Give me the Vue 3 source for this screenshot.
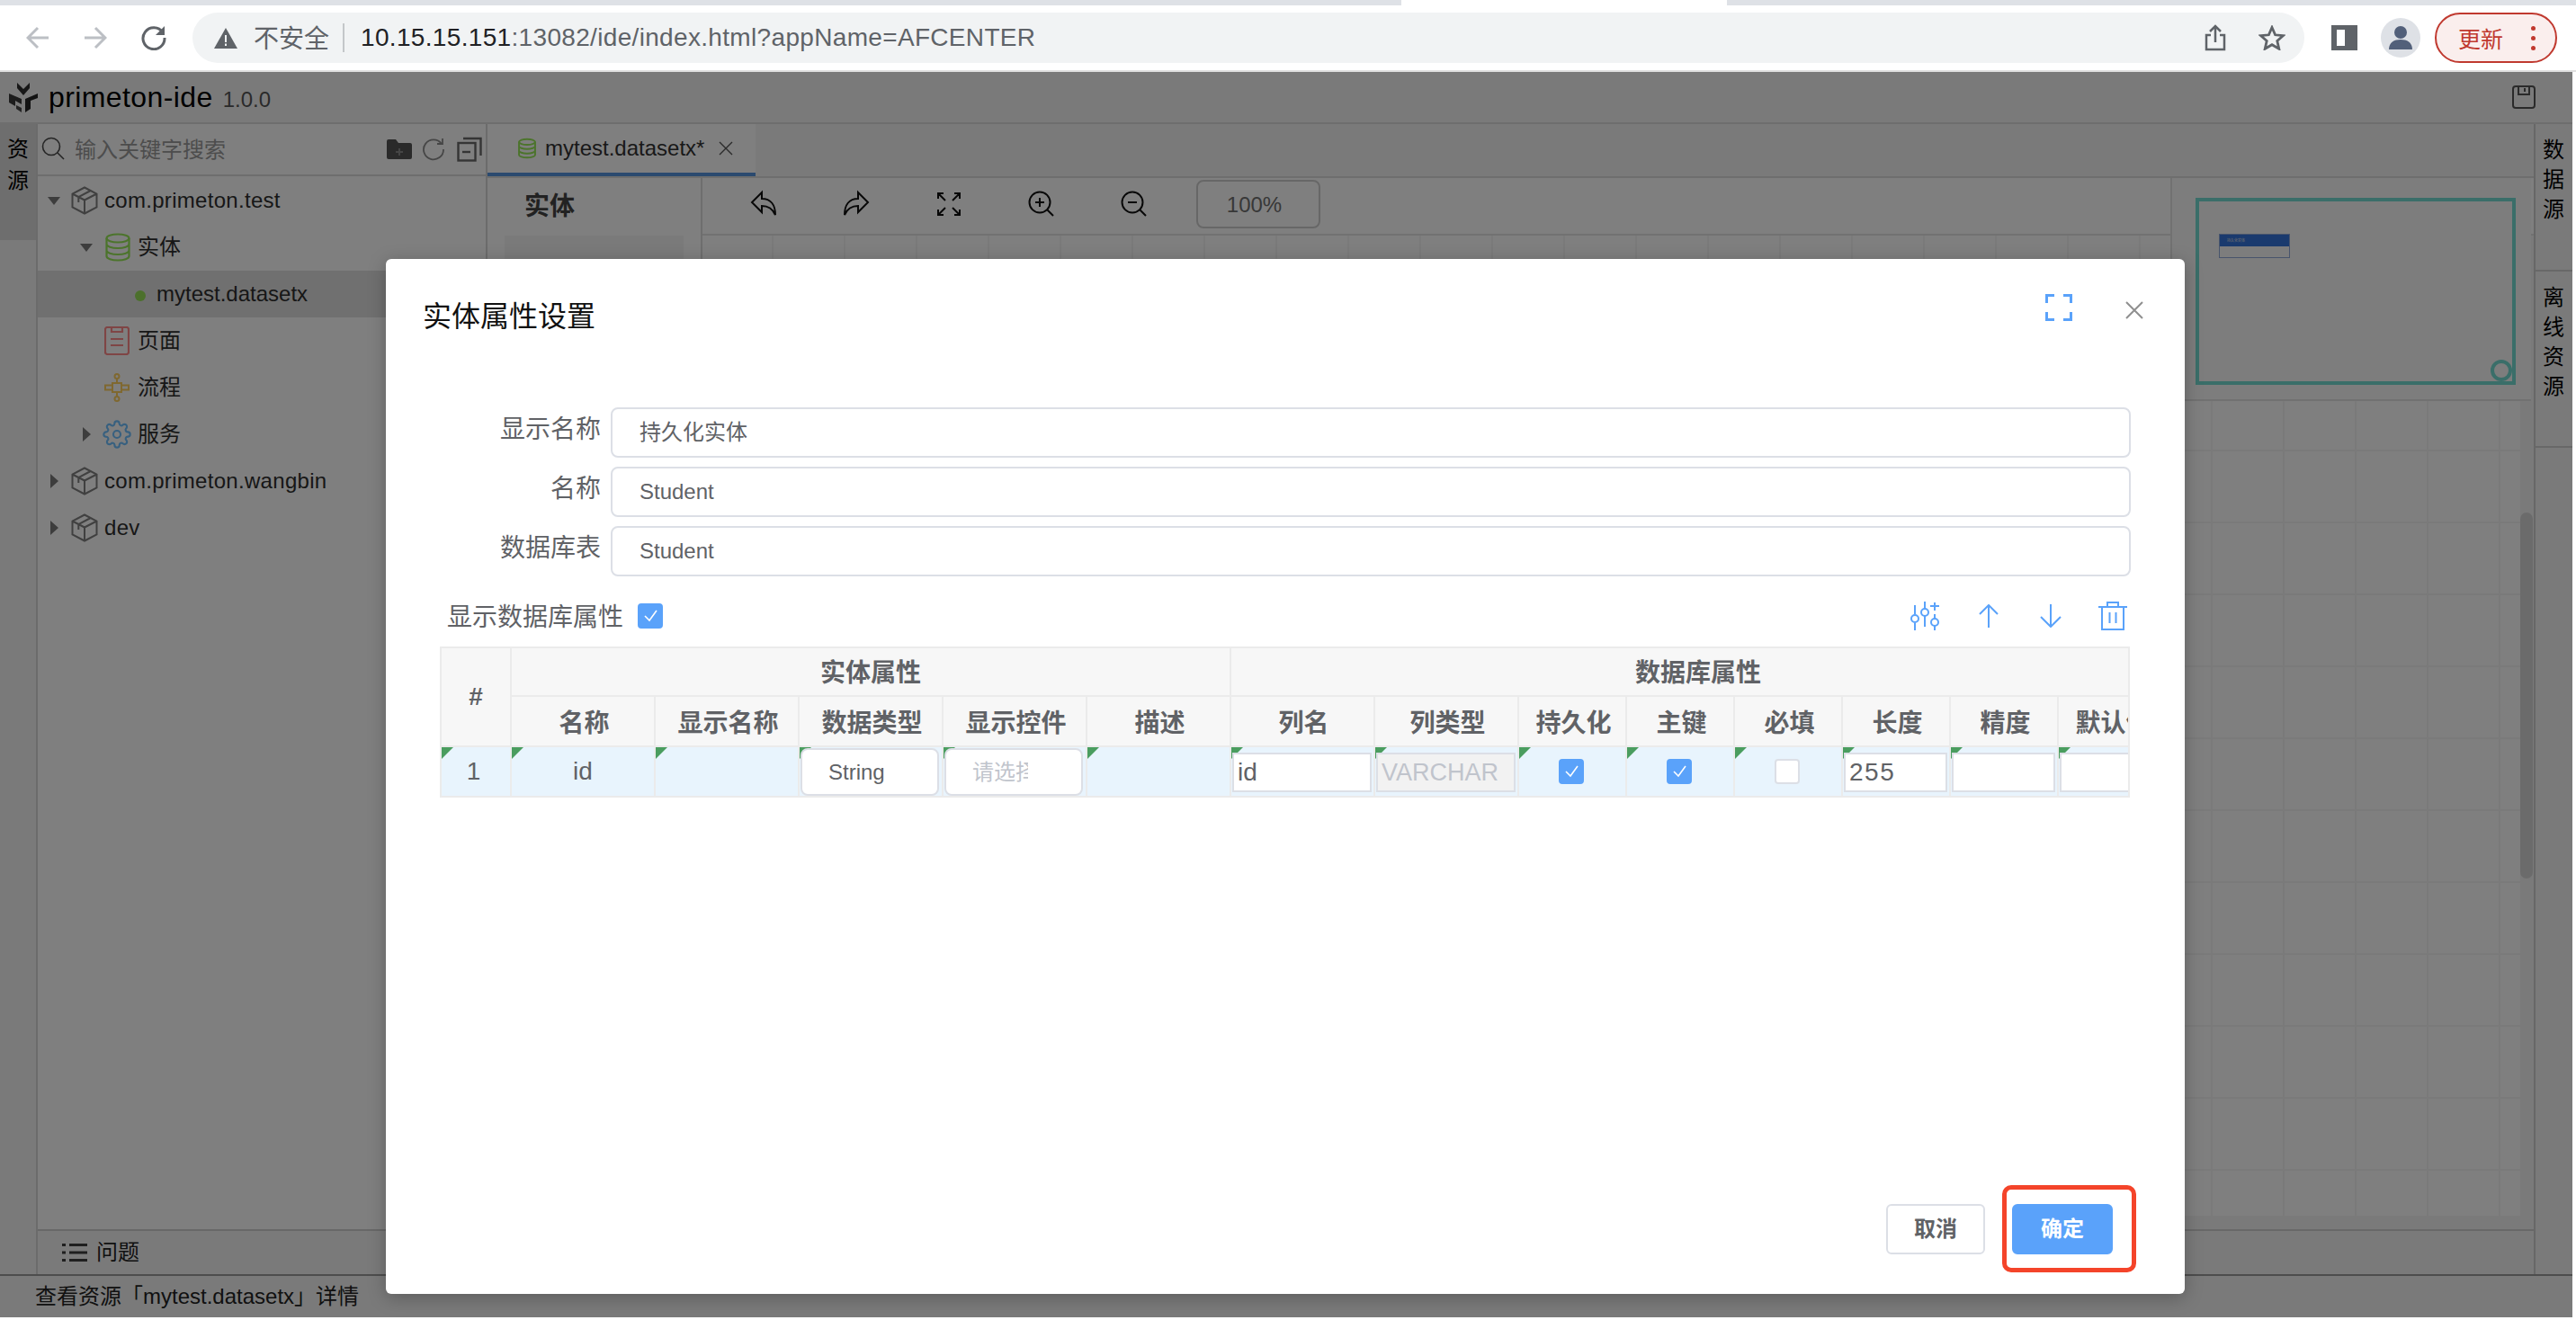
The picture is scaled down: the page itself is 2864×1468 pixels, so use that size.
<script setup>
const tree = [
  { icon: 'box', arrow: 'down', label: 'com.primeton.test', arrowX: 53, iconX: 79, pkg: true },
  { icon: 'db', arrow: 'down', label: '实体', arrowX: 89, iconX: 117, cjk: true },
  { icon: 'dot', label: 'mytest.datasetx', iconX: 150, selected: true },
  { icon: 'page', label: '页面', iconX: 116, cjk: true },
  { icon: 'flow', label: '流程', iconX: 116, cjk: true },
  { icon: 'gear', arrow: 'right', label: '服务', arrowX: 92, iconX: 114, cjk: true },
  { icon: 'box', arrow: 'right', label: 'com.primeton.wangbin', arrowX: 56, iconX: 79, pkg: true },
  { icon: 'box', arrow: 'right', label: 'dev', arrowX: 56, iconX: 79, pkg: true }
]
const fields = [
  { label: '显示名称', value: '持久化实体' },
  { label: '名称', value: 'Student' },
  { label: '数据库表', value: 'Student' }
]
const subHeads = ['名称', '显示名称', '数据类型', '显示控件', '描述', '列名', '列类型', '持久化', '主键', '必填', '长度', '精度', '默认值']
const gearPath = 'M19.4 15a1.65 1.65 0 0 0 .33 1.82l.06.06a2 2 0 0 1 0 2.83 2 2 0 0 1-2.83 0l-.06-.06a1.65 1.65 0 0 0-1.82-.33 1.65 1.65 0 0 0-1 1.51V21a2 2 0 0 1-2 2 2 2 0 0 1-2-2v-.09A1.65 1.65 0 0 0 9 19.4a1.65 1.65 0 0 0-1.82.33l-.06.06a2 2 0 0 1-2.83 0 2 2 0 0 1 0-2.83l.06-.06a1.65 1.65 0 0 0 .33-1.82 1.65 1.65 0 0 0-1.51-1H3a2 2 0 0 1-2-2 2 2 0 0 1 2-2h.09A1.65 1.65 0 0 0 4.6 9a1.65 1.65 0 0 0-.33-1.82l-.06-.06a2 2 0 0 1 0-2.83 2 2 0 0 1 2.83 0l.06.06a1.65 1.65 0 0 0 1.82.33H9a1.65 1.65 0 0 0 1-1.51V3a2 2 0 0 1 2-2 2 2 0 0 1 2 2v.09a1.65 1.65 0 0 0 1 1.51 1.65 1.65 0 0 0 1.82-.33l.06-.06a2 2 0 0 1 2.83 0 2 2 0 0 1 0 2.83l-.06.06a1.65 1.65 0 0 0-.33 1.82V9a1.65 1.65 0 0 0 1.51 1H21a2 2 0 0 1 2 2 2 2 0 0 1-2 2h-.09a1.65 1.65 0 0 0-1.51 1z'
</script>

<template>
  <div class="page">
    <div class="tabstrip"><div class="active-tab"></div></div>
    <div class="chrome">
      <svg class="nav back" viewBox="0 0 26 26" fill="none"><path d="M25 13H3M13 2 2 13l11 11" /></svg>
      <svg class="nav forward" viewBox="0 0 26 26" fill="none"><path d="M1 13h22M13 2l11 11-11 11" /></svg>
      <svg class="nav reload" viewBox="0 0 28 28" fill="none"><path d="M24 8A12 12 0 1 0 26 14" /><path class="fill" d="M26 1v10H16z" /></svg>
      <div class="omnibox">
        <svg class="warn" viewBox="0 0 26 23"><path d="M13 0 26 23H0z" fill="#5f6368" /><path d="M12 8h2v8h-2zM12 17.500h2v2.500h-2z" fill="#f1f3f4" /></svg>
        <span class="insecure">不安全</span>
        <span class="divider"></span>
        <span class="url"><b>10.15.15.151</b>:13082/ide/index.html?appName=AFCENTER</span>
        <svg class="share" viewBox="0 0 24 30" fill="none"><path d="M12 20V2M6 8l6-6 6 6M7 12H2v16h20V12h-5" /></svg>
        <svg class="star" viewBox="0 0 30 28" fill="none"><path d="M15 2.500l3.600 8.300 9 .8-6.800 5.900 2 8.800L15 21.700l-7.800 4.600 2-8.800-6.800-5.900 9-.8z" /></svg>
      </div>
      <div class="side-panel"><span></span></div>
      <div class="avatar">
        <svg viewBox="0 0 44 44"><circle cx="22" cy="16" r="7" fill="#52607a" /><path d="M9 35c0-8 6-11 13-11s13 3 13 11z" fill="#52607a" /></svg>
      </div>
      <div class="update">
        <span>更新</span>
        <i class="dots"><em></em><em></em><em></em></i>
      </div>
    </div>
    <div class="chrome-line"></div>

    <div class="app">
      <header class="app-head">
        <svg class="logo" viewBox="0 0 32 33">
          <path d="M9 0l7 7 7-7v6l-7 8-7-8z" fill="#2e2e2e" />
          <path d="M0 12l14 6v6L7 20v6L0 22z" fill="#3a3a3a" />
          <path d="M32 12l-14 6v15l6-4V20l8-3z" fill="#262626" />
          <path d="M8 25l6 3v5l-6-4z" fill="#4a4a4a" />
        </svg>
        <span class="app-name">primeton-ide</span>
        <span class="app-version">1.0.0</span>
        <svg class="save" viewBox="0 0 26 26" fill="none"><rect x="1" y="1" width="24" height="24" rx="3" /><path d="M7 1v9h12V1M14 3v4" /></svg>
      </header>

      <div class="app-body">
        <div class="rail-left">
          <div class="rail-tab">资源</div>
        </div>

        <div class="mid">
          <div class="mid-row">
            <aside class="sidebar">
              <div class="search">
                <svg class="search-ico" viewBox="0 0 26 26" fill="none"><circle cx="11" cy="11" r="9.500" /><path d="M18 18l7 7" /></svg>
                <span class="search-ph">输入关键字搜索</span>
                <svg class="s-folder" viewBox="0 0 28 22"><path d="M0 2a2 2 0 0 1 2-2h8l3 4h13a2 2 0 0 1 2 2v14a2 2 0 0 1-2 2H2a2 2 0 0 1-2-2z" fill="#555" /><path d="M13 10h2v3h3v2h-3v3h-2v-3h-3v-2h3z" fill="#8a8a8a" /></svg>
                <svg class="s-refresh" viewBox="0 0 26 26" fill="none"><path d="M22 7A11 11 0 1 0 24 13" /><path d="M23 1v6h-6" /></svg>
                <svg class="s-collapse" viewBox="0 0 28 28" fill="none"><rect x="1.500" y="7" width="19" height="19.500" /><path d="M7 2h19.500v19" /><path d="M6 17h9" /></svg>
              </div>
              <div class="tree">
                <div v-for="(n, i) in tree" :key="i" class="tree-row" :class="{ selected: n.selected }">
                  <span v-if="n.arrow" class="arrow" :class="n.arrow" :style="{ left: n.arrowX + 'px' }"></span>
                  <span class="tree-icon" :style="{ left: n.iconX + 'px' }">
                    <svg v-if="n.icon === 'box'" class="i-box" viewBox="0 0 30 32" fill="none"><path d="M15 1.500 28.500 8.500v15L15 30.500 1.500 23.500v-15zM1.500 8.500 15 15.500l13.500-7M15 15.500v15M21.700 5 8.300 12v6" /></svg>
                    <svg v-else-if="n.icon === 'db'" class="i-db" viewBox="0 0 28 32" fill="none"><ellipse cx="14" cy="6" rx="12.500" ry="4.500" /><path d="M1.500 6v20c0 2.500 5.600 4.500 12.500 4.500s12.500-2 12.500-4.500V6M1.500 12.500c0 2.500 5.600 4.500 12.500 4.500s12.500-2 12.500-4.500M1.500 19.500c0 2.500 5.600 4.500 12.500 4.500s12.500-2 12.500-4.500" /></svg>
                    <span v-else-if="n.icon === 'dot'" class="i-dot"></span>
                    <svg v-else-if="n.icon === 'page'" class="i-page" viewBox="0 0 28 32" fill="none"><rect x="1" y="1" width="26" height="30" rx="2.500" /><path d="M8 1v5h12V1M7 14h14M7 21h14" /></svg>
                    <svg v-else-if="n.icon === 'flow'" class="i-flow" viewBox="0 0 28 32" fill="none"><circle cx="14" cy="3.500" r="2.500" /><circle cx="14" cy="28.500" r="2.500" /><path d="M14 6v5M14 21v5M9 11h10v10H9zM9 13.500H1v5h8M19 13.500h8v5h-8" /></svg>
                    <svg v-else class="i-gear" viewBox="0 0 24 24" fill="none"><circle cx="12" cy="12" r="3" /><path :d="gearPath" /></svg>
                  </span>
                  <span class="tree-label" :class="{ pkg: n.pkg, cjk: n.cjk }">{{ n.label }}</span>
                </div>
              </div>
            </aside>

            <section class="center">
              <div class="tabbar">
                <div class="file-tab">
                  <svg class="i-db small" viewBox="0 0 28 32" fill="none"><ellipse cx="14" cy="6" rx="12.500" ry="4.500" /><path d="M1.500 6v20c0 2.500 5.600 4.500 12.500 4.500s12.500-2 12.500-4.500V6M1.500 12.500c0 2.500 5.600 4.500 12.500 4.500s12.500-2 12.500-4.500M1.500 19.500c0 2.500 5.600 4.500 12.500 4.500s12.500-2 12.500-4.500" /></svg>
                  <span class="file-name">mytest.datasetx*</span>
                  <svg class="file-close" viewBox="0 0 16 16" fill="none"><path d="M1 1l14 14M15 1 1 15" /></svg>
                </div>
              </div>
              <div class="work">
                <div class="palette">
                  <div class="palette-title">实体</div>
                  <div class="palette-box"></div>
                </div>
                <div class="canvas-col">
                  <div class="canvas-tools">
                    <svg class="tool" viewBox="0 0 32 32" fill="none"><path d="M14 3 3 14l11 11v-7c7 0 12 3 15 10 0-11-5-18-15-18z" /></svg>
                    <svg class="tool" viewBox="0 0 32 32" fill="none"><path d="M18 3l11 11-11 11v-7c-7 0-12 3-15 10 0-11 5-18 15-18z" /></svg>
                    <svg class="tool" viewBox="0 0 32 32" fill="none"><path d="M4 10V4h6M4 4l8 8M22 4h6v6M28 4l-8 8M4 22v6h6M4 28l8-8M28 22v6h-6M28 28l-8-8" /></svg>
                    <svg class="tool" viewBox="0 0 32 32" fill="none"><circle cx="14" cy="14" r="11.500" /><path d="M22.500 22.500 29 29M14 9v10M9 14h10" /></svg>
                    <svg class="tool" viewBox="0 0 32 32" fill="none"><circle cx="14" cy="14" r="11.500" /><path d="M22.500 22.500 29 29M9 14h10" /></svg>
                    <div class="zoom-box">100%</div>
                  </div>
                  <div class="canvas-row">
                    <div class="canvas"></div>
                    <div class="v-track"></div>
                  </div>
                  <div class="h-track"></div>
                </div>
                <div class="minimap">
                  <div class="mini-view">
                    <div class="mini-node"><div class="mini-node-head">持久化实体</div></div>
                    <span class="mini-handle"></span>
                  </div>
                </div>
                <div class="v-thumb"></div>
              </div>
            </section>
          </div>
          <div class="problems">
            <svg class="i-list" viewBox="0 0 28 22"><path d="M0 1h4v3H0zM8 1h20v3H8zM0 9.500h4v3H0zM8 9.500h20v3H8zM0 18h4v3H0zM8 18h20v3H8z" fill="#3f3f3f" /></svg>
            <span>问题</span>
          </div>
        </div>

        <div class="rail-right">
          <div class="rail-item first">数据源</div>
          <div class="rail-item second">离线资源</div>
        </div>
      </div>

      <footer class="status">查看资源「mytest.datasetx」详情</footer>
      <div class="mask"></div>
    </div>

    <div class="modal">
      <div class="modal-head">
        <span class="modal-title">实体属性设置</span>
        <svg class="m-full" viewBox="0 0 30 30" fill="none"><path d="M10 1.500H1.500V10M20 1.500h8.500V10M10 28.500H1.500V20M20 28.500h8.500V20" /></svg>
        <svg class="m-close" viewBox="0 0 20 20" fill="none"><path d="M1 1l18 18M19 1 1 19" /></svg>
      </div>

      <div class="form">
        <div v-for="f in fields" :key="f.label" class="form-row">
          <label class="form-label">{{ f.label }}</label>
          <div class="form-input">{{ f.value }}</div>
        </div>
      </div>

      <div class="option-row">
        <span class="option-label">显示数据库属性</span>
        <span class="check on"><svg viewBox="0 0 28 28" fill="none"><path d="M8 14l5 5 8-11" /></svg></span>
        <svg class="act a-sliders" viewBox="0 0 32 32" fill="none"><path d="M5 4v10M5 24v8M16 0v8M16 16v12M27 14v5M27 27v5M22 5h10M27 1v9" /><circle cx="5" cy="19" r="4" /><circle cx="16" cy="12" r="4" /><circle cx="27" cy="23" r="4" /></svg>
        <svg class="act a-up" viewBox="0 0 22 26" fill="none"><path d="M11 26V1M1 11 11 1l10 10" /></svg>
        <svg class="act a-down" viewBox="0 0 24 26" fill="none"><path d="M12 0v25M1 14l11 11 11-11" /></svg>
        <svg class="act a-trash" viewBox="0 0 32 32" fill="none"><path d="M0 6h32M10 6V1h12v5M4 6v25h24V6M12.500 12v12M19.500 12v12" /></svg>
      </div>

      <div class="table-wrap">
        <div class="grid">
          <div class="th hash">#</div>
          <div class="th group g1">实体属性</div>
          <div class="th group g2">数据库属性</div>
          <div v-for="h in subHeads" :key="h" class="th sub">{{ h }}</div>

          <div class="td num"><i class="mark"></i>1</div>
          <div class="td"><i class="mark"></i>id</div>
          <div class="td"><i class="mark"></i></div>
          <div class="td pad-select"><i class="mark"></i><div class="select">String</div></div>
          <div class="td pad-select"><i class="mark"></i><div class="select ph"><span>请选择</span></div></div>
          <div class="td"><i class="mark"></i></div>
          <div class="td pad-input"><i class="mark"></i><div class="cell-input">id</div></div>
          <div class="td pad-input"><i class="mark"></i><div class="cell-input disabled">VARCHAR</div></div>
          <div class="td chk"><i class="mark"></i><span class="check on"><svg viewBox="0 0 28 28" fill="none"><path d="M8 14l5 5 8-11" /></svg></span></div>
          <div class="td chk"><i class="mark"></i><span class="check on"><svg viewBox="0 0 28 28" fill="none"><path d="M8 14l5 5 8-11" /></svg></span></div>
          <div class="td chk"><i class="mark"></i><span class="check"></span></div>
          <div class="td pad-input"><i class="mark"></i><div class="cell-input digits">255</div></div>
          <div class="td pad-input"><i class="mark"></i><div class="cell-input"></div></div>
          <div class="td pad-input"><i class="mark"></i><div class="cell-input"></div></div>
        </div>
      </div>

      <div class="modal-foot">
        <button class="btn">取消</button>
        <div class="confirm-wrap">
          <button class="btn primary">确定</button>
          <span class="annotation"></span>
        </div>
      </div>
    </div>
  </div>
</template>

<style>
html, body { margin: 0; padding: 0; background: #fff; }
</style>

<style scoped>
* { box-sizing: border-box; }
.page {
  position: relative;
  width: 2864px;
  height: 1468px;
  overflow: hidden;
  background: #fff;
  font-family: "Liberation Sans", "Noto Sans CJK SC", sans-serif;
  font-size: 24px;
  color: #333;
}

/* browser chrome */
.tabstrip { height: 6px; background: #dee1e6; padding-left: 1558px; }
.active-tab { width: 362px; height: 6px; background: #fff; }
.chrome { height: 72px; display: flex; align-items: center; padding-left: 29px; }
.nav { stroke-width: 3; }
.nav path { stroke: currentColor; }
.nav.back { width: 26px; height: 26px; color: #bcbfc4; }
.nav.forward { width: 26px; height: 26px; color: #bcbfc4; margin-left: 38px; }
.nav.reload { width: 28px; height: 28px; color: #5f6368; margin-left: 38px; }
.nav .fill { fill: #5f6368; stroke: none; }
.omnibox {
  width: 2348px;
  height: 56px;
  margin-left: 29px;
  border-radius: 28px;
  background: #f1f3f4;
  display: flex;
  align-items: center;
  padding-left: 24px;
}
.warn { width: 26px; height: 23px; }
.insecure { margin-left: 18px; font-size: 28px; color: #5f6368; margin-bottom: 2px; }
.divider { width: 2px; height: 32px; background: #c4c7c9; margin: 0 18px 0 15px; }
.url { font-size: 28px; color: #5f6368; letter-spacing: 0.33px; }
.url b { font-weight: 400; color: #202124; }
.share { width: 24px; height: 30px; margin-left: auto; stroke: #5f6368; stroke-width: 2.5; }
.star { width: 30px; height: 28px; margin: 0 21px 0 36px; stroke: #5f6368; stroke-width: 2.8; }
.side-panel {
  width: 29px;
  height: 28px;
  margin-left: 30px;
  background: #5f6368;
  padding: 5px 14px 5px 6px;
}
.side-panel span { display: block; width: 100%; height: 100%; background: #fff; }
.avatar { width: 44px; height: 44px; border-radius: 50%; background: #dee1e6; margin-left: 26px; }
.avatar svg { display: block; width: 44px; height: 44px; }
.update {
  width: 136px;
  height: 56px;
  margin-left: 16px;
  border: 2.5px solid #c0392f;
  border-radius: 28px;
  background: #faeeed;
  display: flex;
  align-items: center;
  padding-left: 24px;
  color: #c0392f;
  font-size: 25px;
}
.dots { display: flex; flex-direction: column; gap: 6px; margin-left: 31px; }
.dots em { display: block; width: 5px; height: 5px; border-radius: 50%; background: #c0392f; }
.chrome-line { height: 2px; background: #e0e0e0; }

/* app */
.app {
  position: relative;
  width: 2860px;
  height: 1385px;
  background: #f5f5f5;
  display: flex;
  flex-direction: column;
}
.mask { position: absolute; inset: 0; background: rgba(0, 0, 0, 0.5); }
.app-head {
  height: 58px;
  flex: none;
  border-bottom: 2px solid #dcdcdc;
  display: flex;
  align-items: center;
  padding: 0 41px 0 10px;
}
.logo { width: 32px; height: 33px; }
.app-name { margin-left: 12px; font-size: 32px; letter-spacing: 0.4px; color: #000; }
.app-version { margin: 5px 0 0 11px; color: #555; font-size: 24px; }
.save { width: 26px; height: 26px; margin-left: auto; stroke: #555; stroke-width: 2; }

.app-body { flex: 1; display: flex; min-height: 0; }
.rail-left { width: 42px; flex: none; border-right: 2px solid #d6d6d6; }
.rail-tab {
  height: 129px;
  width: 40px;
  background: #dcdcdc;
  padding: 10px 8px 0;
  line-height: 35px;
  color: #000;
}
.mid { width: 2775px; flex: none; display: flex; flex-direction: column; }
.mid-row { flex: 1; display: flex; min-height: 0; }

.sidebar { width: 500px; flex: none; background: #fff; border-right: 2px solid #d6d6d6; }
.search {
  height: 58px;
  border-bottom: 2px solid #dcdcdc;
  display: flex;
  align-items: center;
  padding-left: 4px;
}
.search-ico { width: 26px; height: 26px; stroke: #4a4a4a; stroke-width: 1.6; margin-bottom: 2px; }
.search-ph { margin-left: 11px; color: #9a9a9a; margin-bottom: 4px; }
.s-folder { width: 28px; height: 22px; margin-left: 179px; }
.s-refresh { width: 26px; height: 26px; margin-left: 11px; stroke: #8c8c8c; stroke-width: 1.8; }
.s-collapse { width: 28px; height: 28px; margin-left: 13px; stroke: #6a6a6a; stroke-width: 2.4; }

.tree { padding-top: 1px; }
.tree-row { position: relative; height: 52px; display: flex; align-items: center; }
.tree-row.selected { background: #e0e0e0; }
.arrow { position: absolute; top: 19px; margin-left: -42px; width: 0; height: 0; }
.arrow.down { border-left: 7px solid transparent; border-right: 7px solid transparent; border-top: 9px solid #7a7a7a; margin-top: 3px; }
.arrow.right { border-top: 8px solid transparent; border-bottom: 8px solid transparent; border-left: 9px solid #7a7a7a; margin-top: -1px; }
.tree-icon { position: absolute; top: 0; height: 52px; margin-left: -42px; display: flex; align-items: center; }
.tree-label { color: #2e2e2e; margin-left: 111px; }
.tree-label.cjk { margin-bottom: 5px; }
.tree-row:nth-child(1) .tree-label, .tree-row:nth-child(7) .tree-label, .tree-row:nth-child(8) .tree-label { margin-left: 74px; }
.tree-row:nth-child(3) .tree-label { margin-left: 132px; }
.pkg { letter-spacing: 0.3px; }
.i-box { width: 30px; height: 32px; stroke: #808080; stroke-width: 2; display: block; }
.i-db { width: 28px; height: 32px; stroke: #98e858; stroke-width: 2.2; display: block; }
.i-dot { display: block; width: 12px; height: 12px; border-radius: 50%; background: #98e058; margin-top: 4px; }
.i-page { width: 28px; height: 32px; stroke: #ff8a8a; stroke-width: 2.2; display: block; }
.i-flow { width: 28px; height: 32px; stroke: #ffd060; stroke-width: 2; display: block; }
.i-gear { width: 32px; height: 32px; stroke: #70c0ff; stroke-width: 1.6; display: block; }

.center { width: 2275px; flex: none; display: flex; flex-direction: column; min-height: 0; }
.tabbar { height: 60px; flex: none; border-bottom: 2px solid #dcdcdc; background: #f5f5f5; }
.file-tab {
  width: 298px;
  height: 58px;
  background: #fff;
  border-bottom: 4px solid #5694de;
  display: flex;
  align-items: center;
  padding-left: 34px;
}
.i-db.small { width: 20px; height: 24px; flex: none; stroke-width: 2.8; }
.file-name { margin-left: 10px; color: #333; }
.file-close { width: 16px; height: 16px; margin-left: 16px; stroke: #555; stroke-width: 1.4; }

.work { position: relative; flex: 1; display: flex; min-height: 0; }
.palette { width: 239px; flex: none; border-right: 2px solid #dcdcdc; background: #fff; padding: 0 19px; }
.palette-title { height: 64px; padding: 14px 22px 0; font-size: 28px; font-weight: 700; color: #444; line-height: 36px; }
.palette-box { height: 80px; background: #f5f5f5; }
.canvas-col { flex: 1; display: flex; flex-direction: column; min-width: 0; }
.canvas-tools {
  height: 64px;
  flex: none;
  border-bottom: 2px solid #e2e2e2;
  background: #fff;
  display: flex;
  align-items: center;
  padding: 0 0 4px 52px;
  gap: 71px;
}
.tool { width: 32px; height: 32px; stroke: #111; stroke-width: 2; flex: none; }
.zoom-box {
  width: 138px;
  height: 54px;
  margin: 0 0 0 -18px;
  border: 2px solid #cfcfcf;
  border-radius: 8px;
  display: flex;
  align-items: center;
  justify-content: center;
  color: #707070;
  padding: 2px 9px 0 0;
}
.canvas-row { flex: 1; display: flex; min-height: 0; }
.canvas {
  flex: 1;
  background-color: #fff;
  background-image:
    linear-gradient(to right, #f5f5f5 2px, transparent 2px),
    linear-gradient(to bottom, #f5f5f5 2px, transparent 2px);
  background-size: 80px 80px;
  background-position: 77px -2px;
}
.v-track { width: 15px; background: #f5f5f5; }
.h-track { height: 15px; background: #f5f5f5; }
.minimap {
  position: absolute;
  left: 1871px;
  top: 0;
  width: 401px;
  height: 248px;
  background: #fafafa;
  border-left: 2px solid #e2e2e2;
  border-bottom: 2px solid #e2e2e2;
  padding: 22px 18px 0 26px;
}
.mini-view { position: relative; width: 356px; height: 208px; border: 4px solid #74dcd2; }
.mini-node {
  position: absolute;
  left: 22px;
  top: 36px;
  width: 79px;
  height: 27px;
  border: 1px solid #90a8d8;
}
.mini-node-head {
  height: 13px;
  background: #3474dc;
  font-size: 4px;
  line-height: 13px;
  padding-left: 8px;
  color: #e0e0e0;
  white-space: nowrap;
}
.mini-handle {
  position: absolute;
  right: 0;
  bottom: 0;
  width: 24px;
  height: 24px;
  border: 4px solid #74dcd2;
  border-radius: 50%;
}
.v-thumb {
  position: absolute;
  left: 2260px;
  top: 372px;
  width: 14px;
  height: 407px;
  border-radius: 7px;
  background: #d6d6d6;
}

.problems {
  height: 50px;
  flex: none;
  border-top: 2px solid #d0d0d0;
  background: #f5f5f5;
  display: flex;
  align-items: center;
  padding-left: 27px;
}
.i-list { width: 28px; height: 22px; }
.problems span { margin: 0 0 5px 10px; color: #222; }

.rail-right { width: 43px; flex: none; border-left: 2px solid #cfcfcf; }
.rail-item {
  padding: 12px 8px 0;
  line-height: 33px;
  color: #000;
  border-bottom: 2px solid #d0d0d0;
}
.rail-item.first { height: 164px; }
.rail-item.second { height: 196px; }

.status {
  height: 48px;
  flex: none;
  border-top: 2px solid #9a9a9a;
  background: #f5f5f5;
  padding: 5px 0 0 39px;
  color: #222;
  line-height: 36px;
}

/* modal */
.modal {
  position: absolute;
  left: 429px;
  top: 288px;
  width: 2000px;
  height: 1151px;
  background: #fff;
  border-radius: 6px;
  box-shadow: 0 4px 20px rgba(0, 0, 0, 0.25);
  display: flex;
  flex-direction: column;
}
.modal-head { height: 124px; flex: none; display: flex; align-items: center; padding-left: 41px; }
.modal-title { font-size: 32px; color: #111; margin-bottom: 3px; }
.m-full { width: 30px; height: 30px; margin: 0 0 16px auto; stroke: #5aa2fa; stroke-width: 3; }
.m-close { width: 20px; height: 20px; margin: 0 46px 10px 59px; stroke: #8f8f8f; stroke-width: 2; }

.form { padding: 41px 60px 0 0; display: flex; flex-direction: column; gap: 10px; }
.form-row { display: flex; height: 56px; }
.form-label {
  width: 239px;
  text-align: right;
  font-size: 28px;
  line-height: 49px;
  color: #606266;
}
.form-input {
  flex: 1;
  margin-left: 11px;
  border: 2px solid #dcdfe6;
  border-radius: 8px;
  padding-left: 30px;
  line-height: 52px;
  color: #606266;
}

.option-row { height: 60px; margin-top: 14px; display: flex; align-items: center; padding-left: 68px; }
.option-label { font-size: 28px; color: #606266; width: 196px; white-space: nowrap; margin-bottom: 2px; }
.option-row > .check { margin-left: 16px; }
.check {
  width: 28px;
  height: 28px;
  flex: none;
  display: inline-block;
  border: 2px solid #dcdfe6;
  border-radius: 4px;
  background: #fff;
  position: relative;
}
.check.on { background: #5aa2fa; border-color: #5aa2fa; }
.check svg { position: absolute; left: -2px; top: -2px; width: 28px; height: 28px; stroke: #fff; stroke-width: 1.6; }
.act { flex: none; stroke: #5aa2fa; stroke-width: 2; }
.a-sliders { width: 32px; height: 32px; margin-left: auto; }
.a-up { width: 22px; height: 26px; margin-left: 44px; }
.a-down { width: 24px; height: 26px; margin-left: 46px; }
.a-trash { width: 32px; height: 32px; margin: 0 64px 0 41px; }

.table-wrap {
  margin: 4px 0 0 60px;
  width: 1879px;
  height: 168px;
  border: 2px solid #ebebeb;
  overflow: hidden;
  flex: none;
}
.grid {
  display: grid;
  grid-template-columns: 78px repeat(7, 160px) repeat(6, 120px);
  grid-template-rows: 54px 56px 56px;
  width: 1918px;
}
.th {
  background: #f7f7f7;
  border-right: 2px solid #ebebeb;
  border-bottom: 2px solid #ebebeb;
  display: flex;
  align-items: center;
  justify-content: center;
  font-size: 28px;
  font-weight: 700;
  color: #606266;
  white-space: nowrap;
  overflow: hidden;
}
.group { padding-bottom: 3px; }
.sub { padding-left: 3px; }
.hash { grid-row: 1 / 3; }
.g1 { grid-column: span 5; }
.g2 { grid-column: span 8; }
.td {
  position: relative;
  background: #e8f4fd;
  border-right: 2px solid #ebebeb;
  border-bottom: 2px solid #ebebeb;
  display: flex;
  align-items: center;
  justify-content: center;
  font-size: 28px;
  color: #606266;
}
.num { padding-right: 5px; }
.chk { padding-right: 3px; }
.mark {
  position: absolute;
  left: 0;
  top: 0;
  width: 13px;
  height: 13px;
  background: #4a9d5f;
  clip-path: polygon(0 0, 100% 0, 0 100%);
}
.pad-select { padding: 1px 3px 0 1px; }
.pad-input { padding: 6px 2px 4px 1px; }
.select {
  position: relative;
  width: 100%;
  height: 100%;
  background: #fff;
  border: 2px solid #dcdfe6;
  border-radius: 8px;
  font-size: 24px;
  line-height: 50px;
  padding-left: 29px;
}
.select.ph { color: #c0c4cc; padding-left: 29px; }
.select.ph span { display: block; width: 62px; overflow: hidden; white-space: nowrap; }
.cell-input {
  position: relative;
  width: 100%;
  height: 100%;
  background: #fff;
  border: 2px solid #dcdfe6;
  padding-left: 4px;
  font-size: 28px;
  line-height: 40px;
  white-space: nowrap;
  overflow: hidden;
}
.cell-input.disabled { background: #f2f2f2; color: #c0c4cc; font-size: 27px; }
.cell-input.digits { letter-spacing: 1.5px; }

.modal-foot {
  margin-top: auto;
  display: flex;
  justify-content: flex-end;
  gap: 30px;
  padding: 0 80px 44px 0;
}
.btn {
  width: 110px;
  height: 56px;
  border: 2px solid #dcdfe6;
  border-radius: 6px;
  background: #fff;
  font-family: inherit;
  font-size: 24px;
  font-weight: 700;
  color: #606266;
  padding: 0 0 5px;
}
.btn.primary { width: 112px; background: #5aa2fa; border-color: #5aa2fa; color: #fff; display: block; }
.confirm-wrap { position: relative; }
.annotation {
  position: absolute;
  left: -11px;
  top: -21px;
  width: 149px;
  height: 97px;
  border: 5px solid #f4442a;
  border-radius: 10px;
}
</style>
